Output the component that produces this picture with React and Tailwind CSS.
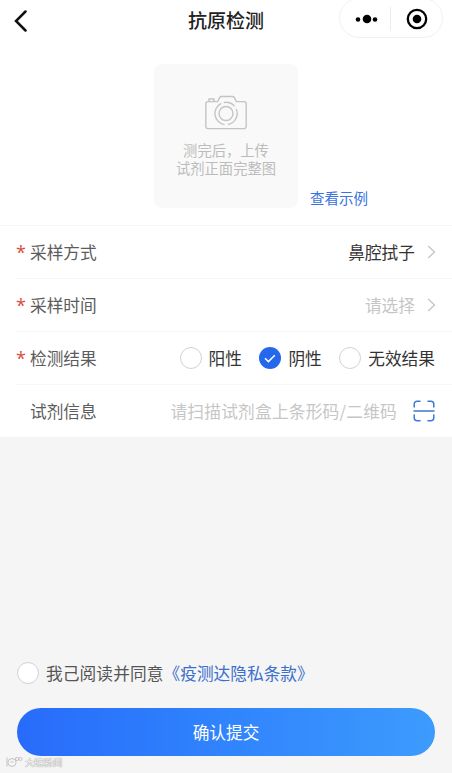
const results = [
    { label: '阳性', checked: false },
    { label: '阴性', checked: true },
    { label: '无效结果', checked: false },
];

function NavBar() {
    return (
        <header className="flex h-10 items-start justify-between pr-[9px]">
            <div className="flex h-[41px] w-[113px] items-center pl-[14px]">
                <svg width="14" height="22" viewBox="0 0 14 22" fill="none">
                    <path d="M11.5 1.5 2 11l9.5 9.5" stroke="#111" strokeWidth="2.5" strokeLinecap="round" />
                </svg>
            </div>

            <h1 className="h-10 text-[19px] leading-[40px] font-medium text-[#222]">
                抗原检测
            </h1>

            <div className="-mt-[2px] flex h-[40px] w-[104px] items-center rounded-full border border-[#f1f1f1] pt-[2px]">
                <svg className="ml-[15px]" width="24" height="12" viewBox="0 0 24 12" fill="#000">
                    <circle cx="3" cy="6.5" r="2.3" />
                    <circle cx="12" cy="6" r="4.3" />
                    <circle cx="20" cy="6.5" r="2.3" />
                </svg>
                <span className="ml-[11px] h-[24px] w-px bg-[#ededed]" />
                <svg className="ml-[15px]" width="22" height="22" viewBox="0 0 22 22">
                    <circle cx="11" cy="11" r="9.2" fill="none" stroke="#000" strokeWidth="2.3" />
                    <circle cx="11" cy="11" r="4.3" fill="#000" />
                </svg>
            </div>
        </header>
    );
}

function CameraIcon() {
    return (
        <svg width="44" height="36" viewBox="0 0 44 36" fill="none" stroke="#c4c4c4" strokeWidth="1.4">
            <path d="M4 6.6h9.6l2.2-4.2q.5-.9 1.5-.9h11.4q1 0 1.5.9l2.2 4.2H40a2.200 2.200 0 0 1 2.200 2.200v22.600a2.200 2.200 0 0 1-2.200 2.200H4a2.200 2.200 0 0 1-2.200-2.200V8.800A2.200 2.200 0 0 1 4 6.600Z" />
            <path d="M5 6.400V4h5v2.400" />
            <path d="M17.300 8.400A11.200 11.200 0 0 0 20.600 29.600M24 29.500A11.200 11.200 0 0 0 32.200 14M30.500 11.200A11.200 11.200 0 0 0 19.700 7.600" />
            <circle cx="22" cy="18.500" r="7" />
        </svg>
    );
}

function ScanIcon() {
    return (
        <svg width="22" height="22" viewBox="0 0 22 22" fill="none" stroke="#3c78cf" strokeWidth="1.5" strokeLinecap="round">
            <path d="M1.200 7V4.200a3 3 0 0 1 3-3H7M15 1.200h2.800a3 3 0 0 1 3 3V7M20.800 15v2.800a3 3 0 0 1-3 3H15M7 20.800H4.200a3 3 0 0 1-3-3V15M1 11h20" />
        </svg>
    );
}

function Radio({ checked }) {
    if (checked) {
        return (
            <span className="flex size-[22px] items-center justify-center rounded-full bg-[#2468ec]">
                <svg width="12" height="9" viewBox="0 0 12 9" fill="none">
                    <path d="m1 4.300 3.400 3.300L10.800 1.200" stroke="#fff" strokeWidth="1.500" />
                </svg>
            </span>
        );
    }

    return <span className="size-[22px] rounded-full border border-[#d2d2d2] bg-white" />;
}

function Row({ label, required, last, children }) {
    return (
        <div className="ml-4 flex h-[53px]">
            <div
                className={[
                    'flex flex-1 items-center border-b pr-[17px]',
                    last ? 'border-transparent' : 'border-[#f7f7f7]',
                ].join(' ')}
            >
                <span className="h-[22px] w-[14px] font-['Open_Sans',sans-serif] text-[18px] leading-[22px] text-[#dd4a3a]">
                    {required && '*'}
                </span>
                <span className="text-[#5c5c5c]">{label}</span>
                <div className="ml-auto flex items-center">{children}</div>
            </div>
        </div>
    );
}

function Arrow() {
    return (
        <svg className="-mr-px ml-[12px]" width="9" height="14" viewBox="0 0 9 14" fill="none">
            <path d="m1.200 1 6.300 6-6.300 6" stroke="#c4c4c4" strokeWidth="1.300" />
        </svg>
    );
}

export default function App() {
    return (
        <div className="relative flex h-[773px] w-[452px] flex-col overflow-hidden bg-[#f5f5f5] font-['Noto_Sans_CJK_SC',sans-serif] text-[16.7px] leading-6">
            <main className="h-[437px] bg-white">
                <NavBar />

                <section className="flex h-[185px] items-start pt-6 pl-[154px]">
                    <div className="flex h-[144px] w-[144px] flex-col items-center rounded-lg bg-[#f9f9f9] pt-[31px] text-[14.3px] leading-[18px] text-[#bcbcbc]">
                        <CameraIcon />
                        <p className="mt-[10px] text-center whitespace-nowrap">
                            测完后，上传
                            <br />
                            试剂正面完整图
                        </p>
                    </div>
                    <a className="mt-[122px] ml-[12px] text-[14.5px] text-[#3973df]">查看示例</a>
                </section>

                <section className="border-t border-[#f7f7f7]">
                    <Row label="采样方式" required>
                        <span className="text-[#333]">鼻腔拭子</span>
                        <Arrow />
                    </Row>
                    <Row label="采样时间" required>
                        <span className="text-[#c6c6c6]">请选择</span>
                        <Arrow />
                    </Row>
                    <Row label="检测结果" required>
                        <div className="flex gap-[17.5px]">
                            {results.map((item) => (
                                <label key={item.label} className="flex items-center gap-[7px] text-[#333]">
                                    <Radio checked={item.checked} />
                                    {item.label}
                                </label>
                            ))}
                        </div>
                    </Row>
                    <Row label="试剂信息" last>
                        <span className="mr-4 tracking-[0.22px] text-[#c6c6c6]">请扫描试剂盒上条形码/二维码</span>
                        <ScanIcon />
                    </Row>
                </section>
            </main>

            <footer className="mt-auto px-[17px] pb-[17px]">
                <div className="flex items-center">
                    <Radio />
                    <p className="ml-[7px] text-[#555]">
                        <span className="tracking-[0.1px]">我己阅读并同意</span>
                        <a className="text-[#3b6fcc]">《疫测达隐私条款》</a>
                    </p>
                </div>
                <button className="mt-[23px] h-12 w-full rounded-full bg-gradient-to-r from-[#286bfb] to-[#3d9bfd] text-white">
                    确认提交
                </button>
            </footer>

            <div className="absolute bottom-[3px] left-[6px] flex items-center gap-[2px] text-[9.3px] leading-4 text-[#f8f8f8] [text-shadow:0_0_1px_#888,0_0_1px_#aaa]">
                <svg width="17" height="12" viewBox="0 0 17 12" fill="none" stroke="#c4c4c4">
                    <circle cx="6" cy="6.5" r="4" />
                    <circle cx="11" cy="3" r="1.6" />
                    <circle cx="14.5" cy="3" r="1.6" />
                    <path d="M1 1.5v9M4.5 6h3" />
                </svg>
                大皖新闻
            </div>
        </div>
    );
}
